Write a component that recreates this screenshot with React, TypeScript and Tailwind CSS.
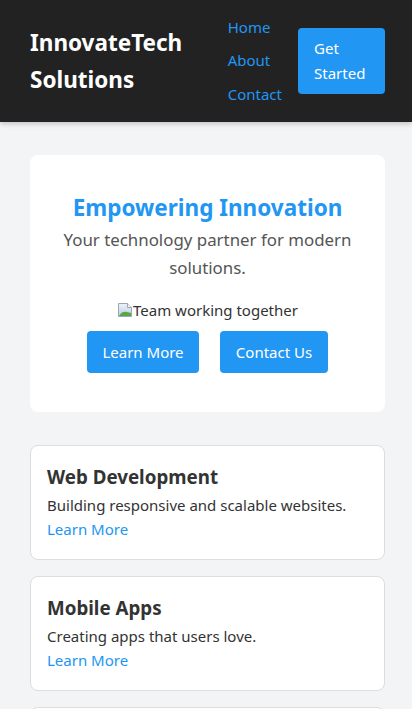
import React from "react";

const font = { fontFamily: '"Noto Sans", "Open Sans", sans-serif' };

function BrokenImage() {
  return (
    <svg width="16" height="16" viewBox="0 0 16 16" className="inline-block align-[-2px]">
      <defs>
        <linearGradient id="sky" x1="0" y1="0" x2="0" y2="1">
          <stop offset="0" stopColor="#eef3f8" />
          <stop offset="1" stopColor="#b9cde3" />
        </linearGradient>
      </defs>
      <path d="M1.5 1.5 H10.5 L14.5 5.5 V14.5 H1.5 Z" fill="url(#sky)" stroke="#9aa7b4" />
      <path d="M10.5 1.5 V5.5 H14.5" fill="#f4f4f4" stroke="#9aa7b4" />
      <path d="M2 14 C4 10 7 9 10 10 L14 11 V14 Z" fill="#5aa646" />
    </svg>
  );
}

function ServiceCard({ title, desc }: { title: string; desc: string }) {
  return (
    <div className="bg-white border border-[#dddddd] rounded-lg px-4 pt-4 pb-[18px]">
      <h3 className="text-[18.75px] leading-[30px] font-bold text-[#333333]">{title}</h3>
      <p className="text-[15px] leading-[24px] text-[#333333] mt-px">{desc}</p>
      <a className="block text-[15px] leading-[24px] text-[#2196f3]">Learn More</a>
    </div>
  );
}

export default function App() {
  return (
    <div style={font} className="h-[709px] overflow-hidden bg-[#f3f4f6] text-[#333333]">
      <header className="bg-[#222222] h-[122px] pl-[30px] pr-[27px] flex items-center justify-between shadow-[0_2px_5px_rgba(0,0,0,0.2)]">
        <div className="text-white font-bold text-[22.5px] leading-[37px] w-[160px]">
          InnovateTech Solutions
        </div>
        <div className="flex items-center gap-4">
          <nav className="flex flex-col">
            <a className="text-[#2196f3] text-[15px] leading-[33.5px]">Home</a>
            <a className="text-[#2196f3] text-[15px] leading-[33.5px]">About</a>
            <a className="text-[#2196f3] text-[15px] leading-[33.5px]">Contact</a>
          </nav>
          <button className="bg-[#2196f3] text-white text-[15px] leading-[25px] w-[87px] h-[66px] px-4 text-left rounded-[4px]">
            Get Started
          </button>
        </div>
      </header>
      <main className="pl-[30px] pr-[27px] pt-[33px] pb-4">
        <section className="bg-white rounded-lg pt-[38px] pb-[39px] px-5 text-center">
          <h1 className="text-[#2196f3] font-bold text-[22.5px] leading-[29px]">Empowering Innovation</h1>
          <p className="text-[#555555] text-[16.875px] leading-[28px] mt-[4px]">
            Your technology partner for modern solutions.
          </p>
          <div className="mt-4 text-[15px] leading-[24px] text-[#333333]">
            <BrokenImage />
            <span>Team working together</span>
          </div>
          <div className="mt-[9px] flex justify-center gap-[21px]">
            <button className="bg-[#2196f3] text-white text-[15px] h-[42px] w-[112px] rounded-[4px]">Learn More</button>
            <button className="bg-[#2196f3] text-white text-[15px] h-[42px] w-[108px] rounded-[4px]">Contact Us</button>
          </div>
        </section>
        <div className="mt-[33px] flex flex-col gap-4">
          <ServiceCard title="Web Development" desc="Building responsive and scalable websites." />
          <ServiceCard title="Mobile Apps" desc="Creating apps that users love." />
          <ServiceCard title="Cloud Solutions" desc="Secure and scalable cloud infrastructure." />
        </div>
      </main>
    </div>
  );
}
